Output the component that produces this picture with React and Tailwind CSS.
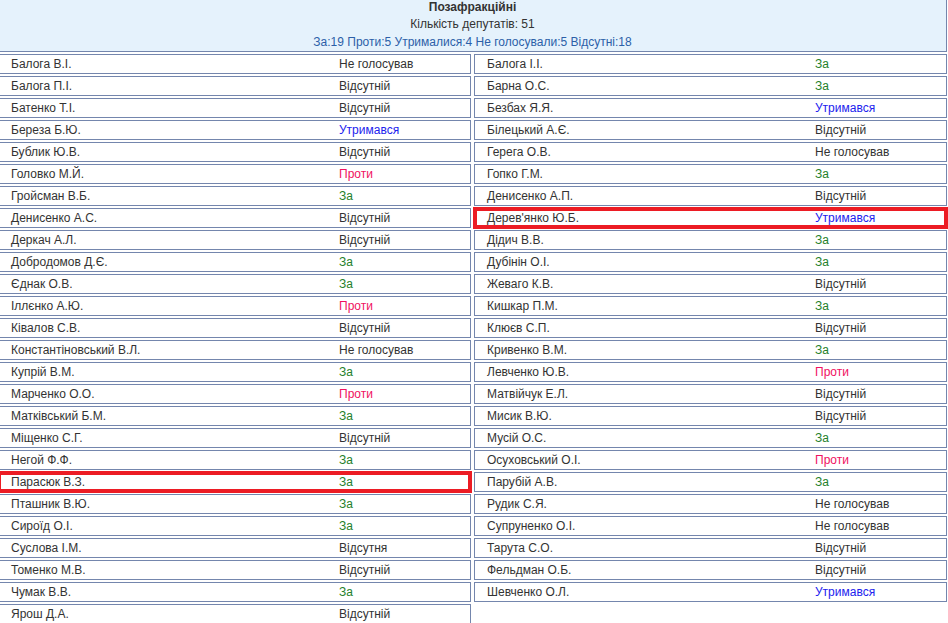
const left = [
  ['Балога В.І.', 'Не голосував'],
  ['Балога П.І.', 'Відсутній'],
  ['Батенко Т.І.', 'Відсутній'],
  ['Береза Б.Ю.', 'Утримався'],
  ['Бублик Ю.В.', 'Відсутній'],
  ['Головко М.Й.', 'Проти'],
  ['Гройсман В.Б.', 'За'],
  ['Денисенко А.С.', 'Відсутній'],
  ['Деркач А.Л.', 'Відсутній'],
  ['Добродомов Д.Є.', 'За'],
  ['Єднак О.В.', 'За'],
  ['Іллєнко А.Ю.', 'Проти'],
  ['Ківалов С.В.', 'Відсутній'],
  ['Константіновський В.Л.', 'Не голосував'],
  ['Купрій В.М.', 'За'],
  ['Марченко О.О.', 'Проти'],
  ['Матківський Б.М.', 'За'],
  ['Міщенко С.Г.', 'Відсутній'],
  ['Негой Ф.Ф.', 'За'],
  ['Парасюк В.З.', 'За', true],
  ['Пташник В.Ю.', 'За'],
  ['Сироїд О.І.', 'За'],
  ['Суслова І.М.', 'Відсутня'],
  ['Томенко М.В.', 'Відсутній'],
  ['Чумак В.В.', 'За'],
  ['Ярош Д.А.', 'Відсутній'],
]

const right = [
  ['Балога І.І.', 'За'],
  ['Барна О.С.', 'За'],
  ['Безбах Я.Я.', 'Утримався'],
  ['Білецький А.Є.', 'Відсутній'],
  ['Герега О.В.', 'Не голосував'],
  ['Гопко Г.М.', 'За'],
  ['Денисенко А.П.', 'Відсутній'],
  ["Дерев'янко Ю.Б.", 'Утримався', true],
  ['Дідич В.В.', 'За'],
  ['Дубінін О.І.', 'За'],
  ['Жеваго К.В.', 'Відсутній'],
  ['Кишкар П.М.', 'За'],
  ['Клюєв С.П.', 'Відсутній'],
  ['Кривенко В.М.', 'За'],
  ['Левченко Ю.В.', 'Проти'],
  ['Матвійчук Е.Л.', 'Відсутній'],
  ['Мисик В.Ю.', 'Відсутній'],
  ['Мусій О.С.', 'За'],
  ['Осуховський О.І.', 'Проти'],
  ['Парубій А.В.', 'За'],
  ['Рудик С.Я.', 'Не голосував'],
  ['Супруненко О.І.', 'Не голосував'],
  ['Тарута С.О.', 'Відсутній'],
  ['Фельдман О.Б.', 'Відсутній'],
  ['Шевченко О.Л.', 'Утримався'],
]

function statusColor(s) {
  if (s === 'За') return 'text-[#23802a]'
  if (s === 'Проти') return 'text-[#f0105f]'
  if (s === 'Утримався') return 'text-[#2222ee]'
  return 'text-[#333333]'
}

function Row({ name, status, marked }) {
  return (
    <div
      className={
        'flex h-[20px] items-center border border-[#7486ad] bg-white' +
        (marked ? ' outline-4 outline-solid outline-[#ec1c24] -outline-offset-3' : '')
      }
    >
      <div className="w-[340px] pl-[12px] text-[#333333]">{name}</div>
      <div className={statusColor(status)}>{status}</div>
    </div>
  )
}

export default function App() {
  return (
    <div className="min-h-screen bg-white overflow-hidden text-[12px] font-['Liberation_Sans',Arial,sans-serif]">
      <div className="-ml-[2px] w-[949px]">

        {/* Header */}
        <div className="border-l border-r border-b border-[#7486ad] bg-[#e5f2fc] text-center">
          <div className="h-[15px] leading-[15px] font-bold text-[#333333]">Позафракційні</div>
          <div className="h-[18px] leading-[18px] text-[#333333]">Кількість депутатів: 51</div>
          <div className="h-[18px] leading-[18px] text-[#2c5fa8]">
            За:19 Проти:5 Утрималися:4 Не голосували:5 Відсутні:18
          </div>
        </div>

        {/* Rows */}
        <div className="mt-[2px] flex gap-[3px] items-start">
          <div className="w-[473px] flex flex-col gap-[2px]">
            {left.map(([n, s, m]) => <Row key={n} name={n} status={s} marked={m} />)}
          </div>
          <div className="w-[473px] flex flex-col gap-[2px]">
            {right.map(([n, s, m]) => <Row key={n} name={n} status={s} marked={m} />)}
          </div>
        </div>

      </div>
    </div>
  )
}
